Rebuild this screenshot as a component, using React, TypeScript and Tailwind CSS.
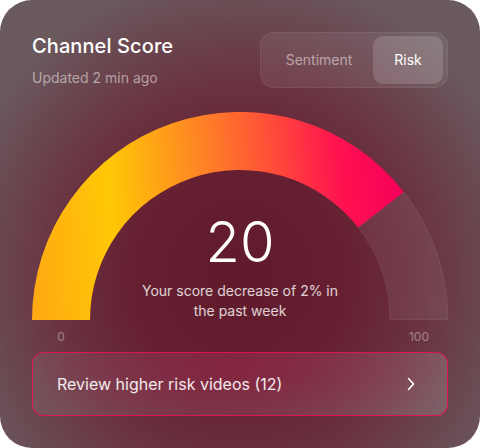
import React from "react";

export default function App() {
  return (
    <div className="w-[480px] h-[448px] bg-white" style={{ fontFamily: "Inter, 'Noto Sans', sans-serif" }}>
      <div className="relative w-[480px] h-[448px] rounded-[32px] overflow-hidden bg-[radial-gradient(ellipse_62%_70%_at_50%_62%,#5f1a2c_0%,#651f31_35%,#6a3341_62%,#6a5a5e_100%)] px-8 pt-8">
        {/* header */}
        <div className="flex justify-between items-start">
          <div>
            <div className="text-[20px] leading-7 font-medium text-white tracking-[0.1px]">Channel Score</div>
            <div className="mt-2 text-sm leading-5 text-white/50">Updated 2 min ago</div>
          </div>
          <div className="flex items-center h-14 p-1 rounded-[14px] bg-white/[0.07] border border-white/[0.06]">
            <div className="w-[108px] h-12 flex items-center justify-center text-sm text-white/50">Sentiment</div>
            <div className="w-[70px] h-12 flex items-center justify-center rounded-[10px] bg-white/[0.15] text-sm text-white">Risk</div>
          </div>
        </div>

        {/* gauge */}
        <div className="relative mt-6 w-[416px] h-[208px]">
          <svg width="416" height="208" viewBox="0 0 416 208" className="block">
            <defs>
              <linearGradient id="g" gradientUnits="userSpaceOnUse" x1="0" y1="140" x2="372" y2="110">
                <stop offset="0" stopColor="#ffaa12" />
                <stop offset="0.22" stopColor="#ffc805" />
                <stop offset="0.5" stopColor="#ff7c28" />
                <stop offset="0.64" stopColor="#ff5436" />
                <stop offset="0.84" stopColor="#ff124f" />
                <stop offset="1" stopColor="#f5005a" />
              </linearGradient>
            </defs>
            <path
              d="M 371.9 79.9 A 208 208 0 0 1 416 208 L 358 208 A 150 150 0 0 0 326.2 115.6 Z"
              fill="rgba(255,255,255,0.07)"
              stroke="rgba(255,255,255,0.1)"
              strokeWidth="0.8"
            />
            <path
              d="M 0 208 A 208 208 0 0 1 371.9 79.9 L 326.2 115.6 A 150 150 0 0 0 58 208 Z"
              fill="url(#g)"
            />
          </svg>
          <div className="absolute left-0 right-0 top-[98px] flex flex-col items-center">
            <div className="text-[56px] leading-[64px] font-light text-white">20</div>
            <div className="mt-[7px] text-sm leading-5 text-white/80 text-center">
              Your score decrease of 2% in
              <br />
              the past week
            </div>
          </div>
        </div>

        {/* labels */}
        <div className="flex justify-between mt-[9px] text-xs leading-4 text-white/40">
          <div className="w-[58px] text-center">0</div>
          <div className="w-[58px] text-center">100</div>
        </div>

        {/* button */}
        <div className="mt-[7px] h-16 w-[416px] rounded-[12px] border border-[#e8124e]/90 bg-[radial-gradient(ellipse_50%_120%_at_50%_20%,rgba(150,20,60,0.5),rgba(150,20,60,0)_100%),linear-gradient(90deg,rgba(255,255,255,0.08),rgba(255,255,255,0.14))] flex items-center justify-between pl-6 pr-8">
          <span className="text-base text-white/90">Review higher risk videos (12)</span>
          <svg width="8" height="14" viewBox="0 0 8 14" fill="none">
            <path d="M1.5 1.5 L6.5 7 L1.5 12.5" stroke="white" strokeWidth="1.6" strokeLinecap="round" strokeLinejoin="round" />
          </svg>
        </div>
      </div>
    </div>
  );
}
